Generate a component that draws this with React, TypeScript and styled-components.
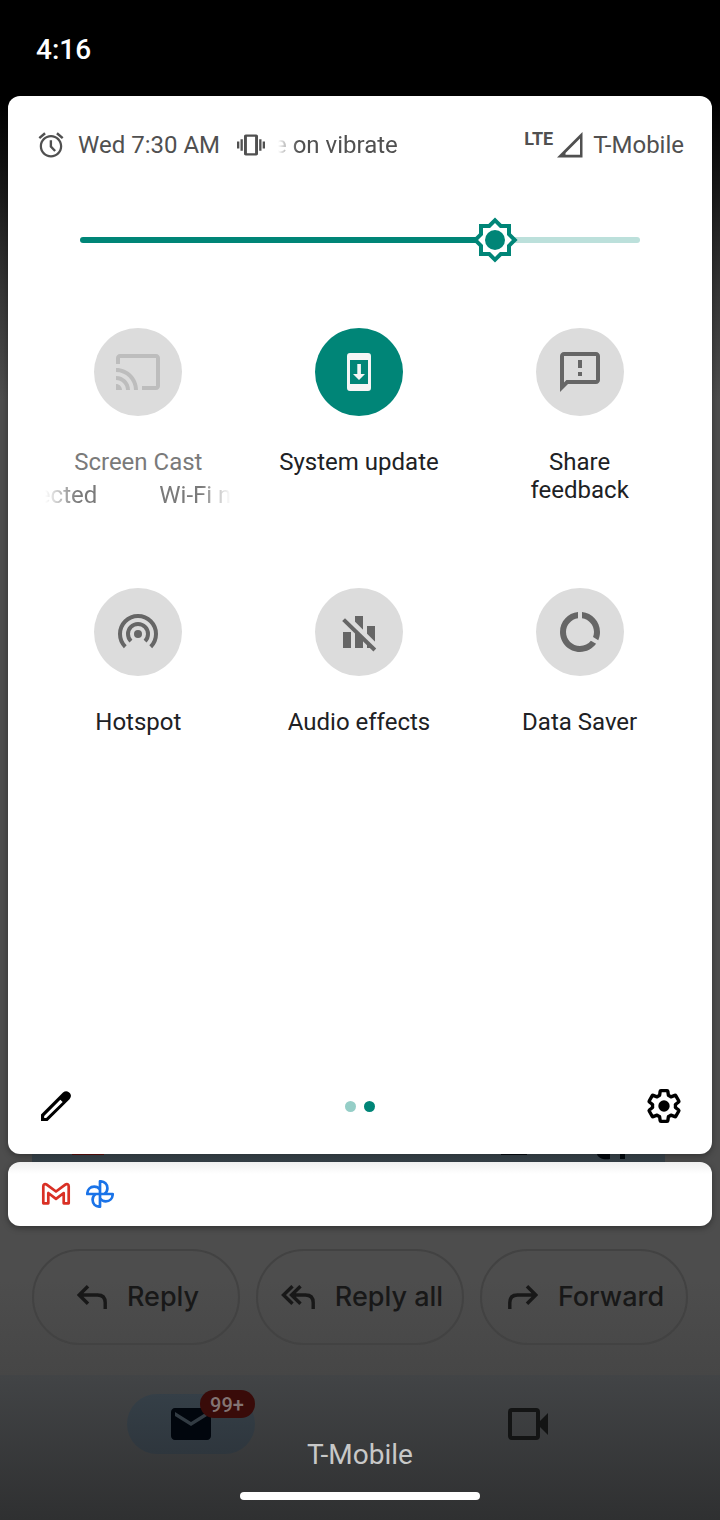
import React, { useState } from "react";
import styled, { createGlobalStyle } from "styled-components";

const GlobalStyle = createGlobalStyle`
  *, *::before, *::after { box-sizing: border-box; }
  body {
    margin: 0;
    background: #000;
    font-family: Roboto, "Liberation Sans", sans-serif;
  }
  button { font-family: inherit; padding: 0; border: 0; background: none; cursor: pointer; }
  svg { display: block; flex: none; }
`;

const TEAL = "#008577";

const Page = styled.div`
  position: relative;
  display: flex;
  flex-direction: column;
  min-height: 100vh;
  background: linear-gradient(
    to bottom,
    #000 100px,
    #181818 190px,
    #353535 290px,
    #4d4d4d 400px,
    #4d4d4d calc(100% - 240px),
    #464646 calc(100% - 145px)
  );
`;

const StatusBar = styled.header`
  display: flex;
  align-items: center;
  height: 96px;
  padding: 4px 36px 0;
`;

const Clock = styled.time`
  font-size: 28px;
  line-height: 32px;
  font-weight: 500;
  color: #fff;
`;

const Panel = styled.main`
  flex: 1;
  display: flex;
  flex-direction: column;
  margin: 0 8px;
  border-radius: 12px;
  background: #fff;
  box-shadow: 0 2px 6px rgba(0, 0, 0, 0.35);
`;

const InfoRow = styled.div`
  display: flex;
  align-items: center;
  justify-content: space-between;
  height: 50px;
  margin-top: 24px;
  padding: 0 28px;
  font-size: 24px;
  line-height: 28px;
  color: #505050;
`;

const InfoGroup = styled.div<{ $gap: number }>`
  display: flex;
  align-items: center;
  gap: ${(p) => p.$gap}px;
  white-space: nowrap;
`;

const FadingText = styled.span`
  mask-image: linear-gradient(to right, transparent 4px, #000 24px);
`;

const NetworkType = styled.span`
  align-self: flex-start;
  font-size: 18px;
  line-height: 14px;
  font-weight: 700;
`;

const BrightnessRow = styled.label`
  display: grid;
  align-items: center;
  height: 48px;
  margin: 46px 72px 0;
  & > * { grid-area: 1 / 1; }
`;

const Track = styled.span`
  display: flex;
  align-items: center;
`;

const TrackFill = styled.span`
  height: 6px;
  border-radius: 3px 0 0 3px;
  background: ${TEAL};
`;

const TrackRest = styled.span`
  flex: 1;
  height: 6px;
  border-radius: 0 3px 3px 0;
  background: #bce0db;
`;

const Thumb = styled.svg`
  position: relative;
  margin: 0 -24px;
`;

const RangeInput = styled.input`
  z-index: 1;
  width: 100%;
  height: 100%;
  margin: 0;
  opacity: 0;
  cursor: pointer;
`;

const TileGrid = styled.div`
  flex: 1;
  display: grid;
  grid-template-columns: repeat(3, 1fr);
  grid-auto-rows: 260px;
  margin-top: 64px;
  padding: 0 22px 0 20px;
`;

const Tile = styled.button<{ $disabled?: boolean }>`
  display: flex;
  flex-direction: column;
  align-items: center;
  font-size: 24px;
  line-height: 28px;
  color: ${(p) => (p.$disabled ? "#7a7a7a" : "#202124")};
`;

const TileCircle = styled.span<{ $tone: "on" | "off" | "disabled" }>`
  display: flex;
  align-items: center;
  justify-content: center;
  width: 88px;
  height: 88px;
  margin-bottom: 32px;
  border-radius: 50%;
  background: ${(p) => (p.$tone === "on" ? TEAL : "#dcdcdc")};
  color: ${(p) => ({ on: "#f5f5f5", off: "#666", disabled: "#bdbdbd" })[p.$tone]};
`;

const TileLabel = styled.span`
  max-width: 184px;
`;

const Marquee = styled.span`
  display: flex;
  justify-content: flex-end;
  gap: 62px;
  width: 186px;
  margin-top: 5px;
  white-space: nowrap;
  mask-image: linear-gradient(to right, transparent, #000 32px, #000 calc(100% - 30px), transparent);
`;

const PanelFooter = styled.footer`
  display: flex;
  align-items: center;
  justify-content: space-between;
  height: 96px;
  padding: 0 24px;
`;

const IconButton = styled.button`
  display: flex;
  align-items: center;
  justify-content: center;
  width: 48px;
  height: 48px;
  color: #000;
`;

const Pager = styled.div`
  display: flex;
  gap: 8px;
`;

const PageDot = styled.span<{ $active?: boolean }>`
  width: 11px;
  height: 11px;
  border-radius: 50%;
  background: ${(p) => (p.$active ? TEAL : "#95cec7")};
`;

const CardEdge = styled.div`
  height: 8px;
  margin: 0 55px 0 32px;
  background: linear-gradient(to bottom, #2d363c, #374249);
`;

const EdgeDrawing = styled.svg`
  width: 100%;
  height: 8px;
`;

const Shelf = styled.section`
  display: flex;
  align-items: center;
  gap: 15px;
  height: 64px;
  margin: 0 8px;
  padding: 0 33px;
  border-radius: 12px;
  background: linear-gradient(to bottom, #efefef, #fff 12px);
  box-shadow: 0 2px 6px rgba(0, 0, 0, 0.35);
`;

const MailActions = styled.div`
  display: flex;
  gap: 16px;
  margin-top: 23px;
  padding: 0 32px;
`;

const MailAction = styled.button`
  flex: 1;
  display: flex;
  align-items: center;
  justify-content: center;
  gap: 20px;
  height: 96px;
  padding-left: 4px;
  border: 2px solid #424242;
  border-radius: 48px;
  font-family: Inter, Roboto, sans-serif;
  font-size: 27px;
  line-height: 32px;
  font-weight: 500;
  color: #181818;
  white-space: nowrap;
`;

const BottomNav = styled.nav`
  display: flex;
  height: 145px;
  margin-top: 30px;
  padding: 19px 24px 0 22px;
  background: linear-gradient(to bottom, #424446, #2f3031);
`;

const NavItem = styled.button<{ $active?: boolean }>`
  position: relative;
  display: flex;
  align-items: center;
  justify-content: center;
  width: 128px;
  height: 60px;
  margin: 0 auto;
  border-radius: 30px;
  background: ${(p) => (p.$active ? "linear-gradient(#353f47, #2e363d)" : "none")};
  color: ${(p) => (p.$active ? "#01060d" : "#131414")};
`;

const Badge = styled.span`
  position: absolute;
  top: -4px;
  right: 0;
  width: 55px;
  height: 28px;
  border-radius: 14px;
  background: #390b09;
  font-size: 20px;
  line-height: 30px;
  font-weight: 500;
  text-align: center;
  color: #837473;
`;

const SystemOverlay = styled.div`
  position: absolute;
  left: 0;
  right: 0;
  bottom: 20px;
  display: flex;
  flex-direction: column;
  align-items: center;
  gap: 21px;
  pointer-events: none;
`;

const Carrier = styled.span`
  font-size: 28px;
  line-height: 32px;
  color: #c8c8c8;
`;

const HomeHandle = styled.span`
  width: 240px;
  height: 8px;
  border-radius: 4px;
  background: #fff;
`;

const Glyph = ({ size, children }: { size: number; children: React.ReactNode }) => (
  <svg width={size} height={size} viewBox="0 0 24 24" fill="currentColor" aria-hidden="true">
    {children}
  </svg>
);

const AlarmIcon = () => (
  <Glyph size={30}>
    <path d="M22 5.72l-4.6-3.86-1.29 1.53 4.6 3.86L22 5.72zM7.88 3.39L6.6 1.86 2 5.71l1.29 1.53 4.59-3.85zM12 4c-4.97 0-9 4.03-9 9s4.02 9 9 9c4.97 0 9-4.03 9-9s-4.03-9-9-9zm0 16.2c-3.98 0-7.2-3.22-7.2-7.2S8.02 5.8 12 5.8s7.2 3.22 7.2 7.2-3.22 7.2-7.2 7.2z" />
    <path d="M11.9 8.2v5l3.4 3.6" fill="none" stroke="currentColor" strokeWidth="1.9" />
  </Glyph>
);

const VibrateIcon = () => (
  <Glyph size={28}>
    <path d="M0 15h2V9H0v6zm3 2h2V7H3v10zm19-8v6h2V9h-2zm-3 8h2V7h-2v10zM16.5 3h-9C6.67 3 6 3.67 6 4.5v15c0 .83.67 1.5 1.5 1.5h9c.83 0 1.5-.67 1.5-1.5v-15c0-.83-.67-1.5-1.5-1.5zM15.5 19h-7V5h7v14z" />
  </Glyph>
);

const SignalIcon = () => (
  <svg width="26" height="26" viewBox="0 0 26 26" fill="currentColor" aria-hidden="true">
    <path fillRule="evenodd" d="M0 25.5L25.5 0v25.5zM8.5 22.8H23V6.5L8.5 21z" />
  </svg>
);

const CastIcon = () => (
  <Glyph size={48}>
    <path d="M21 3H3c-1.1 0-2 .9-2 2v3h2V5h18v14h-7v2h7c1.1 0 2-.9 2-2V5c0-1.1-.9-2-2-2zM1 18v3h3c0-1.66-1.34-3-3-3zm0-4v2c2.76 0 5 2.24 5 5h2c0-3.87-3.13-7-7-7zm0-4v2c4.97 0 9 4.03 9 9h2c0-6.08-4.93-11-11-11z" />
  </Glyph>
);

const UpdateIcon = () => (
  <svg width="48" height="48" viewBox="0 0 48 48" fill="currentColor" aria-hidden="true">
    <path
      fillRule="evenodd"
      d="M15 5h18a3 3 0 0 1 3 3v32a3 3 0 0 1-3 3H15a3 3 0 0 1-3-3V8a3 3 0 0 1 3-3zM15 12v24h18V12z"
    />
    <path d="M22.3 16h3.6v10H30l-6 6-6-6h4.3z" />
  </svg>
);

const FeedbackIcon = () => (
  <Glyph size={48}>
    <path d="M20 2H4c-1.1 0-2 .9-2 2v18l4-4h14c1.1 0 2-.9 2-2V4c0-1.1-.9-2-2-2zm0 14H5.2L4 17.2V4h16v12zM11 12h2v2h-2zm0-6h2v4h-2z" />
  </Glyph>
);

const HotspotIcon = () => (
  <Glyph size={48}>
    <circle cx="12" cy="13" r="2" />
    <g fill="none" stroke="currentColor" strokeWidth="2">
      <path d="M8.46 16.54a5 5 0 1 1 7.08 0" />
      <path d="M5.64 19.36a9 9 0 1 1 12.72 0" />
    </g>
  </Glyph>
);

const AudioEffectsIcon = () => (
  <svg width="48" height="48" viewBox="0 0 48 48" fill="currentColor" aria-hidden="true">
    <path d="M8 24h8v16H8zM20 8h8v32h-8zM32 18h8v22h-8z" />
    <path d="M11 8.2L42.6 39.8" stroke="#dcdcdc" strokeWidth="5" />
    <path d="M8.6 11.6L39.8 42" stroke="currentColor" strokeWidth="4" />
  </svg>
);

const DataSaverIcon = () => (
  <Glyph size={48}>
    <path d="M13 2.05v3.03c3.39.49 6 3.39 6 6.92 0 .9-.18 1.75-.48 2.54l2.6 1.53c.56-1.24.88-2.62.88-4.07 0-5.18-3.95-9.45-9-9.95zM12 19c-3.87 0-7-3.13-7-7 0-3.53 2.61-6.43 6-6.92V2.05c-5.06.5-9 4.76-9 9.95 0 5.52 4.47 10 9.99 10 3.31 0 6.24-1.61 8.06-4.09l-2.6-1.53C16.17 17.98 14.21 19 12 19z" />
  </Glyph>
);

const PencilIcon = () => (
  <Glyph size={40}>
    <path
      fillRule="evenodd"
      d="M3 17.1L16.2 3.9Q18 2.4 19.7 3.7L20.4 4.4Q21.7 6.1 20.1 7.9L6.9 21H3zM4.9 18L14.6 8.2l1.4 1.4L6.1 19.2H4.9z"
    />
  </Glyph>
);

const GearIcon = () => (
  <Glyph size={40}>
    <path
      transform="translate(.96 .96) scale(.92)"
      fill="none"
      stroke="currentColor"
      strokeWidth="2.2"
      strokeLinejoin="round"
      d="M19.43 12.98c.04-.32.07-.64.07-.98 0-.34-.03-.66-.07-.98l2.11-1.65c.19-.15.24-.42.12-.64l-2-3.46c-.09-.16-.26-.25-.44-.25-.06 0-.12.01-.17.03l-2.49 1c-.52-.4-1.08-.73-1.69-.98l-.38-2.65C14.46 2.18 14.25 2 14 2h-4c-.25 0-.46.18-.49.42l-.38 2.65c-.61.25-1.17.59-1.69.98l-2.49-1c-.06-.02-.12-.03-.18-.03-.17 0-.34.09-.43.25l-2 3.46c-.13.22-.07.49.12.64l2.11 1.65c-.04.32-.07.65-.07.98s.03.66.07.98l-2.11 1.65c-.19.15-.24.42-.12.64l2 3.46c.09.16.26.25.44.25.06 0 .12-.01.17-.03l2.49-1c.52.4 1.08.73 1.69.98l.38 2.65c.03.24.24.42.49.42h4c.25 0 .46-.18.49-.42l.38-2.65c.61-.25 1.17-.59 1.69-.98l2.49 1c.06.02.12.03.18.03.17 0 .34-.09.43-.25l2-3.46c.12-.22.07-.49-.12-.64l-2.11-1.65z"
    />
    <circle cx="12" cy="12" r="3.4" />
  </Glyph>
);

const GmailIcon = () => (
  <svg width="30" height="24" viewBox="-1 -1 30 24" fill="none" role="img" aria-label="Gmail">
    <path
      d="M1.3 20.3V3.2C1.3 1.2 3.1 .4 4.7 1.6L14 8.5l9.3-6.9c1.6-1.2 3.4-.4 3.4 1.6V20.3h-5V10L14 15.8 6.3 10V20.3z"
      stroke="#d93025"
      strokeWidth="2.7"
      strokeLinejoin="round"
    />
  </svg>
);

const PINWHEEL_LOBE = "M14 14V1.3C18.6 1.3 21.4 4.4 21.4 8.2C21.4 10.7 20.2 12.7 18.5 14";

const PhotosIcon = () => (
  <svg width="28" height="28" viewBox="0 0 28 28" fill="none" role="img" aria-label="Photos">
    <g stroke="#1a73e8" strokeWidth="2.7" strokeLinejoin="round">
      {[0, 90, 180, 270].map((angle) => (
        <path key={angle} d={PINWHEEL_LOBE} transform={`rotate(${angle} 14 14)`} />
      ))}
    </g>
  </svg>
);

const ArrowIcon = ({ kind }: { kind: "reply" | "replyAll" | "forward" }) => (
  <svg
    width={kind === "replyAll" ? 34 : 30}
    height="24"
    viewBox={kind === "replyAll" ? "-4 0 34 24" : "0 0 30 24"}
    fill="none"
    stroke="currentColor"
    strokeWidth="3.4"
    aria-hidden="true"
  >
    <g transform={kind === "forward" ? "translate(30 0) scale(-1 1)" : undefined}>
      {kind === "replyAll" ? (
        <>
          <path d="M7.5 1.2L-1.5 10l9 8.8" />
          <path d="M15.5 1.2L6.5 10l9 8.8M7 10h13.5c5 0 7.7 2.7 7.7 7.7V24" />
        </>
      ) : (
        <path d="M11 1.2L2.2 10l8.8 8.8M3 10h17.5c5 0 7.7 2.7 7.7 7.7V24" />
      )}
    </g>
  </svg>
);

const MailIcon = () => (
  <Glyph size={48}>
    <path d="M20 4H4c-1.1 0-1.99.9-1.99 2L2 18c0 1.1.9 2 2 2h16c1.1 0 2-.9 2-2V6c0-1.1-.9-2-2-2zm0 4l-8 5-8-5V6l8 5 8-5v2z" />
  </Glyph>
);

const VideoIcon = () => (
  <svg width="40" height="32" viewBox="0 0 40 32" fill="none" aria-hidden="true">
    <rect x="2" y="2" width="28" height="28" rx="2" stroke="currentColor" strokeWidth="4" />
    <path d="M40 5v22l-9-9v-4z" fill="currentColor" />
  </svg>
);

const BrightnessThumb = () => (
  <Thumb width="48" height="48" viewBox="0 0 24 24" aria-hidden="true">
    <path
      d="M20 8.69V4h-4.69L12 .69 8.69 4H4v4.69L.69 12 4 15.31V20h4.69L12 23.31 15.31 20H20v-4.69L23.31 12z"
      fill={TEAL}
    />
    <path
      d="M18 14.48V18h-3.52L12 20.48 9.52 18H6v-3.52L3.52 12 6 9.52V6h3.52L12 3.52 14.48 6H18v3.52L20.48 12z"
      fill="#fff"
    />
    <circle cx="12" cy="12" r="5" fill={TEAL} />
  </Thumb>
);

const MAX_BRIGHTNESS = 255;

export default function App() {
  const [brightness, setBrightness] = useState(189);

  return (
    <>
      <GlobalStyle />
      <Page>
        <StatusBar>
          <Clock>4:16</Clock>
        </StatusBar>

        <Panel>
          <InfoRow>
            <InfoGroup $gap={17}>
              <InfoGroup $gap={12}>
                <AlarmIcon />
                <span>Wed 7:30 AM</span>
              </InfoGroup>
              <InfoGroup $gap={9}>
                <VibrateIcon />
                <FadingText>e on vibrate</FadingText>
              </InfoGroup>
            </InfoGroup>
            <InfoGroup $gap={10}>
              <InfoGroup $gap={4}>
                <NetworkType>LTE</NetworkType>
                <SignalIcon />
              </InfoGroup>
              <span>T-Mobile</span>
            </InfoGroup>
          </InfoRow>

          <BrightnessRow>
            <Track>
              <TrackFill style={{ width: `${(brightness / MAX_BRIGHTNESS) * 100}%` }} />
              <BrightnessThumb />
              <TrackRest />
            </Track>
            <RangeInput
              type="range"
              aria-label="Display brightness"
              max={MAX_BRIGHTNESS}
              value={brightness}
              onChange={(e) => setBrightness(Number(e.target.value))}
            />
          </BrightnessRow>

          <TileGrid>
            <Tile type="button" $disabled>
              <TileCircle $tone="disabled">
                <CastIcon />
              </TileCircle>
              <TileLabel>Screen Cast</TileLabel>
              <Marquee>
                <span>ected</span>
                <span>Wi-Fi n</span>
              </Marquee>
            </Tile>
            <Tile type="button">
              <TileCircle $tone="on">
                <UpdateIcon />
              </TileCircle>
              <TileLabel>System update</TileLabel>
            </Tile>
            <Tile type="button">
              <TileCircle $tone="off">
                <FeedbackIcon />
              </TileCircle>
              <TileLabel>
                Share
                <br />
                feedback
              </TileLabel>
            </Tile>
            <Tile type="button">
              <TileCircle $tone="off">
                <HotspotIcon />
              </TileCircle>
              <TileLabel>Hotspot</TileLabel>
            </Tile>
            <Tile type="button">
              <TileCircle $tone="off">
                <AudioEffectsIcon />
              </TileCircle>
              <TileLabel>Audio effects</TileLabel>
            </Tile>
            <Tile type="button">
              <TileCircle $tone="off">
                <DataSaverIcon />
              </TileCircle>
              <TileLabel>Data Saver</TileLabel>
            </Tile>
          </TileGrid>

          <PanelFooter>
            <IconButton type="button" aria-label="Edit tiles">
              <PencilIcon />
            </IconButton>
            <Pager>
              <PageDot />
              <PageDot $active />
            </Pager>
            <IconButton type="button" aria-label="Settings">
              <GearIcon />
            </IconButton>
          </PanelFooter>
        </Panel>

        <CardEdge>
          <EdgeDrawing viewBox="0 0 633 8" preserveAspectRatio="none" aria-hidden="true">
            <path d="M40 0h32v1H40z" fill="#4a0b08" />
            <path d="M469 0h26v1h-26zM588 0h5v5h-5zM565 0c1 4 6 6 13 5V0z" fill="#02070c" />
          </EdgeDrawing>
        </CardEdge>

        <Shelf aria-label="Notifications">
          <GmailIcon />
          <PhotosIcon />
        </Shelf>

        <MailActions>
          <MailAction type="button">
            <ArrowIcon kind="reply" />
            Reply
          </MailAction>
          <MailAction type="button">
            <ArrowIcon kind="replyAll" />
            Reply all
          </MailAction>
          <MailAction type="button">
            <ArrowIcon kind="forward" />
            Forward
          </MailAction>
        </MailActions>

        <BottomNav>
          <NavItem type="button" aria-label="Mail" $active>
            <MailIcon />
            <Badge>99+</Badge>
          </NavItem>
          <NavItem type="button" aria-label="Meet">
            <VideoIcon />
          </NavItem>
        </BottomNav>

        <SystemOverlay>
          <Carrier>T-Mobile</Carrier>
          <HomeHandle />
        </SystemOverlay>
      </Page>
    </>
  );
}
